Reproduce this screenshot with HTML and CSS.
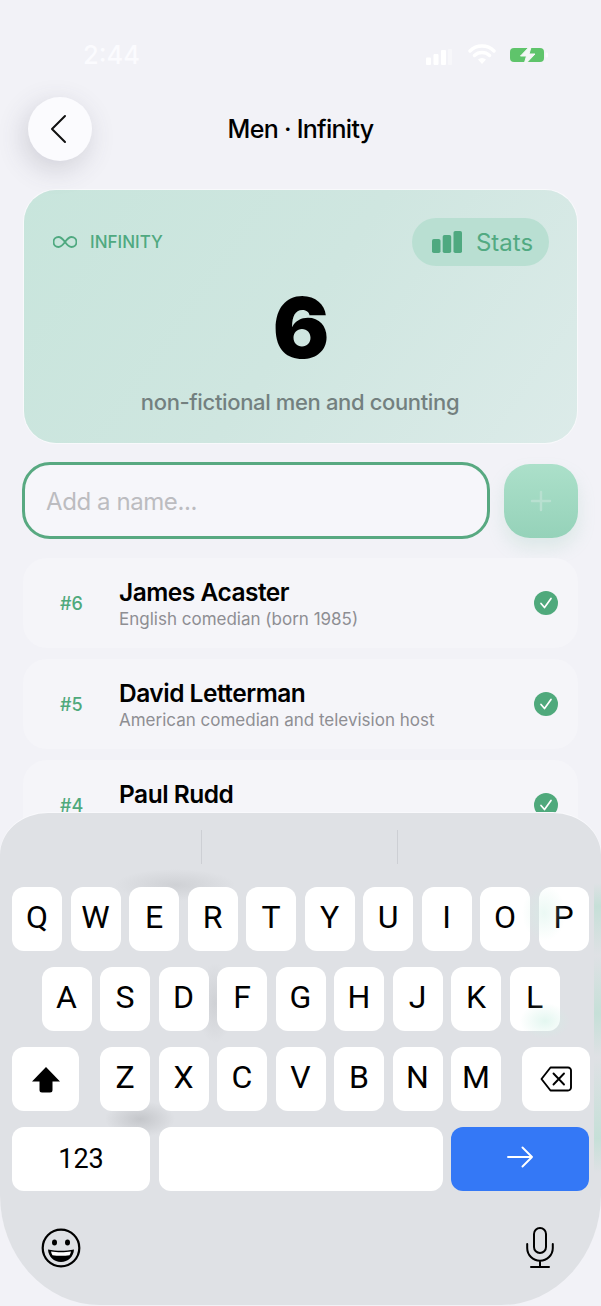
FILE: index.html
```html
<!DOCTYPE html>
<html lang="en">
<head>
<meta charset="utf-8">
<title>Men · Infinity</title>
<link rel="stylesheet" href="styles.css">
</head>
<body>
<div class="screen">
  <div class="status">
    <span class="time">2:44</span>
    <div class="status-icons">
      <svg class="sig" width="26" height="16" viewBox="0 0 26 16"><rect x="0" y="8.500" width="5" height="7.500" rx="1" fill="#fff"/><rect x="7.500" y="5" width="5" height="11" rx="1" fill="#fff"/><rect x="15" y="1" width="5" height="15" rx="1" fill="#fff"/><rect x="22" y="0" width="4" height="16" rx="1" fill="#fff" opacity=".4"/></svg>
      <svg class="wifi" width="28" height="20" viewBox="0 0 28 20"><path d="M2 7a17 17 0 0 1 24 0M6.500 11.500a11 11 0 0 1 15 0" fill="none" stroke="#fff" stroke-width="3.400" stroke-linecap="round"/><path d="M10 15.500a6 6 0 0 1 8 0l-4 4.500z" fill="#fff"/></svg>
      <svg class="batt" width="39" height="20" viewBox="0 0 39 20"><rect x="0" y="3" width="34" height="14" rx="4" fill="#5fc46b"/><rect x="35.500" y="7.500" width="2.500" height="5" rx="1.200" fill="#fff" opacity=".7"/><path d="M22 -1 10.500 11h6L13.500 21 25 9h-6z" fill="#f4f6f6" stroke="#f4f6f6" stroke-width="1"/></svg>
    </div>
  </div>

  <header class="nav">
    <button class="back" aria-label="Back">
      <svg width="18" height="30" viewBox="0 0 18 30"><path d="M16 2 3 15l13 13" fill="none" stroke="#111" stroke-width="2" stroke-linecap="round" stroke-linejoin="round"/></svg>
    </button>
    <h1 class="title">Men · Infinity</h1>
  </header>

  <section class="card">
    <div class="card-top">
      <div class="badge">
        <svg width="24" height="14" viewBox="0 0 24 14"><path d="M12 7c-2.500-3.400-4.300-5-6.500-5a5 5 0 0 0 0 10c2.200 0 4-1.600 6.500-5s4.300-5 6.500-5a5 5 0 0 1 0 10c-2.200 0-4-1.600-6.500-5z" fill="none" stroke="#4fa980" stroke-width="1.900"/></svg>
        <span>INFINITY</span>
      </div>
      <div class="stats">
        <svg width="30" height="22" viewBox="0 0 30 22"><rect x="0" y="8" width="8.500" height="14" rx="1.800" fill="#4fa980"/><rect x="10.700" y="4" width="8.500" height="18" rx="1.800" fill="#4fa980"/><rect x="21.500" y="0" width="8.500" height="22" rx="1.800" fill="#4fa980"/></svg>
        <span>Stats</span>
      </div>
    </div>
    <div class="count">6</div>
    <div class="caption">non-fictional men and counting</div>
  </section>

  <div class="add">
    <div class="field">Add a name...</div>
    <button class="plus" aria-label="Add">
      <svg width="22" height="22" viewBox="0 0 22 22"><path d="M11 2v18M2 11h18" stroke="#b8e0d0" stroke-width="2.400" stroke-linecap="round"/></svg>
    </button>
  </div>

  <ul class="list">
    <li class="row">
      <span class="rank">#6</span>
      <div class="who"><div class="name">James Acaster</div><div class="desc">English comedian (born 1985)</div></div>
      <svg class="check" width="24" height="24" viewBox="0 0 24 24"><circle cx="12" cy="12" r="12" fill="#4fa97c"/><path d="m7 12.500 3.500 4L17 7.500" fill="none" stroke="#fff" stroke-width="1.700" stroke-linecap="round" stroke-linejoin="round"/></svg>
    </li>
    <li class="row">
      <span class="rank">#5</span>
      <div class="who"><div class="name">David Letterman</div><div class="desc">American comedian and television host</div></div>
      <svg class="check" width="24" height="24" viewBox="0 0 24 24"><circle cx="12" cy="12" r="12" fill="#4fa97c"/><path d="m7 12.500 3.500 4L17 7.500" fill="none" stroke="#fff" stroke-width="1.700" stroke-linecap="round" stroke-linejoin="round"/></svg>
    </li>
    <li class="row">
      <span class="rank">#4</span>
      <div class="who"><div class="name">Paul Rudd</div><div class="desc">American actor</div></div>
      <svg class="check" width="24" height="24" viewBox="0 0 24 24"><circle cx="12" cy="12" r="12" fill="#4fa97c"/><path d="m7 12.500 3.500 4L17 7.500" fill="none" stroke="#fff" stroke-width="1.700" stroke-linecap="round" stroke-linejoin="round"/></svg>
    </li>
  </ul>

  <div class="keyboard">
    <i class="glow d1"></i><i class="glow d2"></i><i class="glow d3"></i><i class="glow d4"></i>
    <i class="glow g1"></i><i class="glow g2"></i>
    <div class="suggest"><i></i><i></i></div>
    <div class="keys">
      <div class="krow"><span class="k">Q</span><span class="k">W</span><span class="k">E</span><span class="k">R</span><span class="k">T</span><span class="k">Y</span><span class="k">U</span><span class="k">I</span><span class="k">O</span><span class="k">P</span></div>
      <div class="krow mid"><span class="k">A</span><span class="k">S</span><span class="k">D</span><span class="k">F</span><span class="k">G</span><span class="k">H</span><span class="k">J</span><span class="k">K</span><span class="k">L</span></div>
      <div class="krow">
        <span class="k shift"><svg width="30" height="27" viewBox="0 0 30 27"><path d="M15 1 1 15.500h7.500V24a2.500 2.500 0 0 0 2.500 2.500h8a2.500 2.500 0 0 0 2.500-2.500v-8.500H29z" fill="#000"/></svg></span>
        <span class="k">Z</span><span class="k">X</span><span class="k">C</span><span class="k">V</span><span class="k">B</span><span class="k">N</span><span class="k">M</span>
        <span class="k del"><svg width="32" height="26" viewBox="0 0 32 26"><path d="M10.500 1.500H28a3 3 0 0 1 3 3v17a3 3 0 0 1-3 3H10.500L1.500 13z" fill="none" stroke="#000" stroke-width="1.900" stroke-linejoin="round"/><path d="m13.500 7.500 10.500 11M24 7.500 13.500 18.500" stroke="#000" stroke-width="1.900" stroke-linecap="round"/></svg></span>
      </div>
      <div class="krow">
        <span class="k num">123</span>
        <span class="k space"></span>
        <span class="k go"><svg width="27" height="22" viewBox="0 0 27 22"><path d="M1 11h24M15.500 1.500 25 11l-9.500 9.500" fill="none" stroke="#fff" stroke-width="1.900" stroke-linecap="round" stroke-linejoin="round"/></svg></span>
      </div>
    </div>
    <div class="kbd-bottom">
      <svg width="40" height="40" viewBox="0 0 40 40"><circle cx="20" cy="20" r="18.300" fill="none" stroke="#000" stroke-width="2.200"/><ellipse cx="13.500" cy="14.500" rx="2.500" ry="3" fill="#000"/><ellipse cx="26.500" cy="14.500" rx="2.500" ry="3" fill="#000"/><path d="M7 21.500c8 1.800 18 1.800 26 0-.5 7.500-6 12.500-13 12.500S7.500 29 7 21.500z" fill="#000"/><path d="M10 23.500c6 1 14 1 20 0-.3 1.500-.8 2.800-1.500 3.700-5 .8-12 .8-17 0-.7-.9-1.200-2.200-1.500-3.700z" fill="#fff"/></svg>
      <svg width="28" height="41" viewBox="0 0 28 41"><rect x="8" y="1" width="12" height="25" rx="6" fill="none" stroke="#000" stroke-width="2"/><path d="M1.200 17v4a12.800 12.800 0 0 0 25.600 0v-4M14 34v6M5 40h18" fill="none" stroke="#000" stroke-width="2" stroke-linecap="round"/></svg>
    </div>
  </div>
</div>
</body>
</html>
```
FILE: styles.css
```css
* { box-sizing: border-box; margin: 0; padding: 0; }
html, body { width: 601px; height: 1306px; overflow: hidden; }
body { background: #f2f2f7; font-family: Inter, "Liberation Sans", sans-serif; color: #000; }
.screen { position: relative; width: 601px; height: 1306px; overflow: hidden; padding: 0 23px; }

.status { height: 97px; margin: 0 -23px; padding: 40px 52px 0 83px; display: flex; justify-content: space-between; align-items: flex-start; }
.time { color: #fbfbfe; font-size: 25.500px; font-weight: 500; line-height: 30px; }
.status-icons { display: flex; align-items: center; gap: 0; padding-top: 5px; }
.sig { margin-right: 16px; margin-top: 3px; }
.wifi { margin-right: 14px; margin-top: -3px; }

.nav { position: relative; height: 64px; display: flex; align-items: center; justify-content: center; margin-bottom: 29px; }
.back { position: absolute; left: 5px; top: 0; width: 64px; height: 64px; border: 0; border-radius: 50%; background: #fbfbfe; display: flex; align-items: center; justify-content: center; padding-right: 4px; box-shadow: -4px 8px 28px rgba(70, 70, 90, .2); }
.title { font-size: 25px; font-weight: 500; line-height: 32px; letter-spacing: -.72px; }

.card { margin: 0 1px; height: 253px; border-radius: 32px; background: linear-gradient(125deg, #c8e5dc 0%, #cfe6e0 50%, #dcebe9 100%); box-shadow: 0 0 0 1px #f8f9fb; padding: 28px 28px 0 29px; }
.card-top { display: flex; justify-content: space-between; align-items: center; height: 48px; }
.badge { display: flex; align-items: center; gap: 13px; color: #4fa980; font-size: 17px; font-weight: 500; }
.stats { width: 137px; height: 48px; border-radius: 24px; background: #b9dfd2; display: flex; align-items: center; justify-content: center; gap: 14px; padding-left: 4px; color: #52aa82; font-size: 24px; }
.count { margin-top: 17px; text-align: center; font-size: 84px; font-weight: 900; line-height: 90px; }
.caption { margin-top: 14px; text-align: center; color: #73807f; font-size: 22px; font-weight: 500; line-height: 30px; letter-spacing: -.36px; padding-right: 2px; }

.add { display: flex; gap: 14px; align-items: center; margin: 19px 0 19px -1px; }
.field { width: 468px; height: 77px; border: 3px solid #58a981; border-radius: 28px; background: #f6f6fa; padding: 2px 0 0 21px; display: flex; align-items: center; color: #bcbcc0; font-size: 24px; letter-spacing: -.42px; }
.plus { width: 74px; height: 74px; border: 0; border-radius: 26px; background: linear-gradient(180deg, #ace0ca, #95d2b9); display: flex; align-items: center; justify-content: center; box-shadow: 0 10px 18px rgba(120, 190, 160, .18); }

.list { list-style: none; display: flex; flex-direction: column; gap: 11px; }
.row { height: 90px; border-radius: 24px; background: #f5f5f9; display: flex; align-items: center; padding: 0 20px 0 37px; }
.rank { width: 59px; color: #4fa97c; font-size: 18px; font-weight: 500; }
.who { flex: 1; padding-top: 2px; }
.name { font-size: 24.500px; font-weight: 560; line-height: 30px; letter-spacing: -.5px; }
.desc { color: #8e8e93; font-size: 17px; line-height: 24px; }
.check { flex: none; }

.keyboard { position: absolute; left: 0; top: 813px; width: 601px; height: 492px; background: #dfe1e5; border-radius: 48px 48px 100px 100px / 42px 42px 110px 110px; box-shadow: 0 -1px 0 #f9f9fc; }
.glow { position: absolute; display: block; border-radius: 50%; }
.d1 { left: 115px; top: 56px; width: 120px; height: 32px; background: radial-gradient(closest-side, rgba(170, 172, 176, .3), rgba(170, 172, 176, 0)); }
.d2 { left: 197px; top: 150px; width: 36px; height: 80px; background: radial-gradient(closest-side, rgba(170, 172, 176, .3), rgba(170, 172, 176, 0)); }
.d3 { left: 105px; top: 288px; width: 70px; height: 36px; background: radial-gradient(closest-side, rgba(170, 172, 176, .5), rgba(170, 172, 176, 0)); }
.d4 { left: 594px; top: 70px; width: 7px; height: 290px; border-radius: 0; background: linear-gradient(180deg, rgba(160, 222, 196, 0), rgba(160, 222, 196, .4) 8%, rgba(160, 222, 196, 0) 25%, rgba(160, 222, 196, .4) 45%, rgba(160, 222, 196, 0) 60%, rgba(160, 222, 196, .4) 88%, rgba(160, 222, 196, 0)); }
.g1 { z-index: 2; left: 522px; top: 72px; width: 44px; height: 56px; background: radial-gradient(closest-side, rgba(205, 240, 228, .4), rgba(205, 240, 228, 0)); }
.g2 { z-index: 2; left: 520px; top: 190px; width: 50px; height: 36px; background: radial-gradient(closest-side, rgba(205, 240, 228, .55), rgba(205, 240, 228, 0)); }
.suggest { height: 74px; padding-top: 17px; display: flex; gap: 195px; padding-left: 201px; }
.suggest i { width: 1px; height: 34px; background: #cdcfd4; }
.keys { position: relative; z-index: 1; display: flex; flex-direction: column; gap: 16px; padding: 0 12px; }
.krow { display: flex; gap: 8.500px; height: 64px; }
.krow.mid { padding: 0 29.500px; }
.k { width: 50px; height: 64px; flex: none; border-radius: 12px; background: #fff; display: flex; align-items: center; justify-content: center; font-family: Roboto, "Liberation Sans", sans-serif; font-size: 32px; line-height: 1; padding-bottom: 4px; }
.shift { width: 67px; margin-right: 12.500px; padding-bottom: 0; }
.del { width: 68px; margin-left: 12px; padding-bottom: 0; }
.num { width: 138px; font-size: 27px; padding-bottom: 0; }
.space { width: 284px; }
.go { width: 138px; background: #3478f6; padding-bottom: 4px; }
.kbd-bottom { display: flex; justify-content: space-between; align-items: center; padding: 36px 47px 0 41px; }
```
